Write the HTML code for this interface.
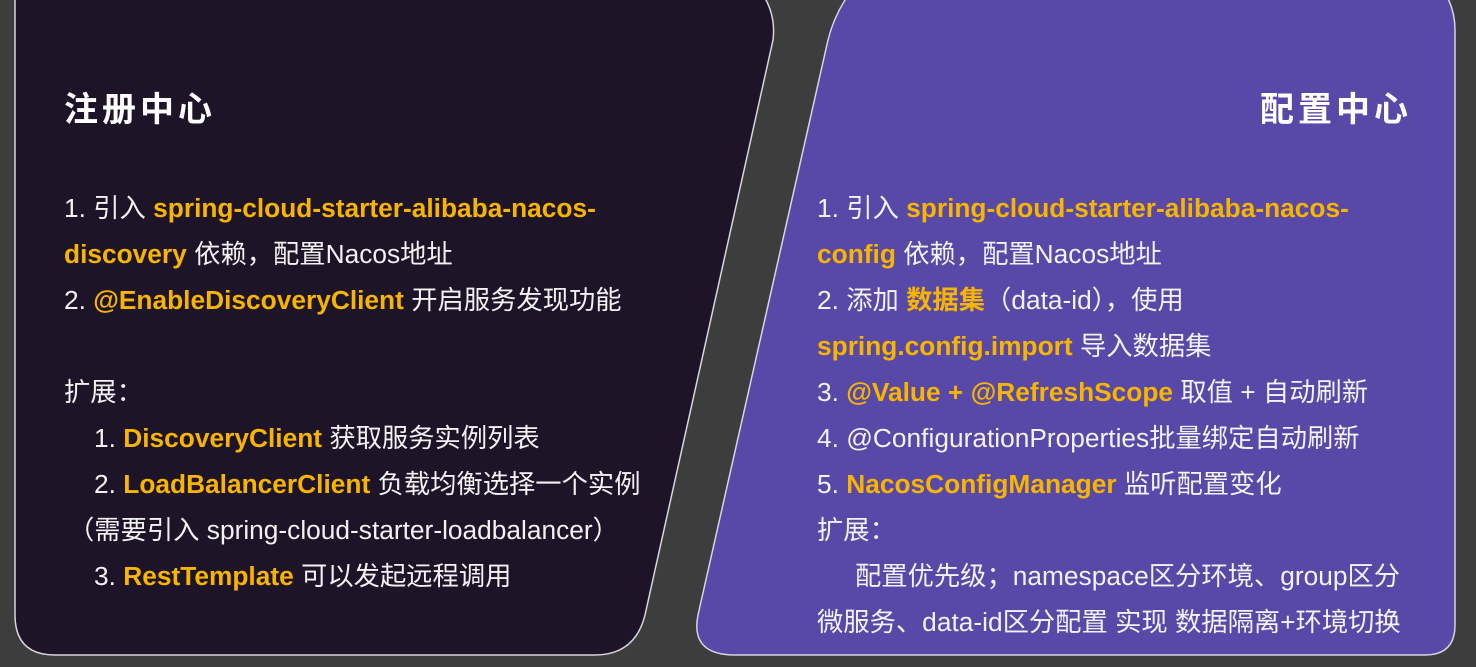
<!DOCTYPE html>
<html><head><meta charset="utf-8"><style>
html,body{margin:0;padding:0;}
body{width:1476px;height:667px;background:#3d3d3d;position:relative;overflow:hidden;font-family:"Liberation Sans","Noto Sans CJK SC",sans-serif;color:#f2f2f2;}
svg{position:absolute;left:0;top:0;}
.t{position:absolute;font-size:26.3px;line-height:46px;white-space:nowrap;}
.y{color:#f7b500;font-weight:bold;}
.h{position:absolute;font-size:34px;font-weight:bold;letter-spacing:4px;color:#fff;line-height:40px;}
</style></head><body>
<svg width="1476" height="667">
<path d="M15,-30 L740,-30 Q778,0 773,40 L645,615 Q635,655 595,655 L55,655 Q15,655 15,615 Z" fill="#1e1428" stroke="#d8d4e0" stroke-width="1.5"/>
<path d="M870,-30 L1425,-30 Q1455,-5 1455,30 L1455,625 Q1455,655 1425,655 L735,655 Q690,655 698,615 L828,40 Q838,0 870,-30 Z" fill="#5848a7" stroke="#d8d4e0" stroke-width="1.5"/>
</svg>
<div class="h" style="left:64px;top:90px;">注册中心</div>
<div class="h" style="right:64px;top:90px;">配置中心</div>

<div class="t" style="left:64px;top:185px;">1. 引入 <span class="y">spring-cloud-starter-alibaba-nacos-</span></div>
<div class="t" style="left:64px;top:231px;"><span class="y">discovery</span> 依赖，配置Nacos地址</div>
<div class="t" style="left:64px;top:277px;">2. <span class="y">@EnableDiscoveryClient</span> 开启服务发现功能</div>
<div class="t" style="left:64px;top:369px;">扩展：</div>
<div class="t" style="left:94px;top:415px;">1. <span class="y">DiscoveryClient</span> 获取服务实例列表</div>
<div class="t" style="left:94px;top:461px;">2. <span class="y">LoadBalancerClient</span> 负载均衡选择一个实例</div>
<div class="t" style="left:68px;top:507px;">（需要引入 spring-cloud-starter-loadbalancer）</div>
<div class="t" style="left:94px;top:553px;">3. <span class="y">RestTemplate</span> 可以发起远程调用</div>

<div class="t" style="left:817px;top:185px;">1. 引入 <span class="y">spring-cloud-starter-alibaba-nacos-</span></div>
<div class="t" style="left:817px;top:231px;"><span class="y">config</span> 依赖，配置Nacos地址</div>
<div class="t" style="left:817px;top:277px;">2. 添加 <span class="y">数据集</span>（data-id），使用</div>
<div class="t" style="left:817px;top:323px;"><span class="y">spring.config.import</span> 导入数据集</div>
<div class="t" style="left:817px;top:369px;">3. <span class="y">@Value + @RefreshScope</span> 取值 + 自动刷新</div>
<div class="t" style="left:817px;top:415px;">4. @ConfigurationProperties批量绑定自动刷新</div>
<div class="t" style="left:817px;top:461px;">5. <span class="y">NacosConfigManager</span> 监听配置变化</div>
<div class="t" style="left:817px;top:507px;">扩展：</div>
<div class="t" style="left:855px;top:553px;">配置优先级；namespace区分环境、group区分</div>
<div class="t" style="left:817px;top:599px;">微服务、data-id区分配置 实现 数据隔离+环境切换</div>
</body></html>
